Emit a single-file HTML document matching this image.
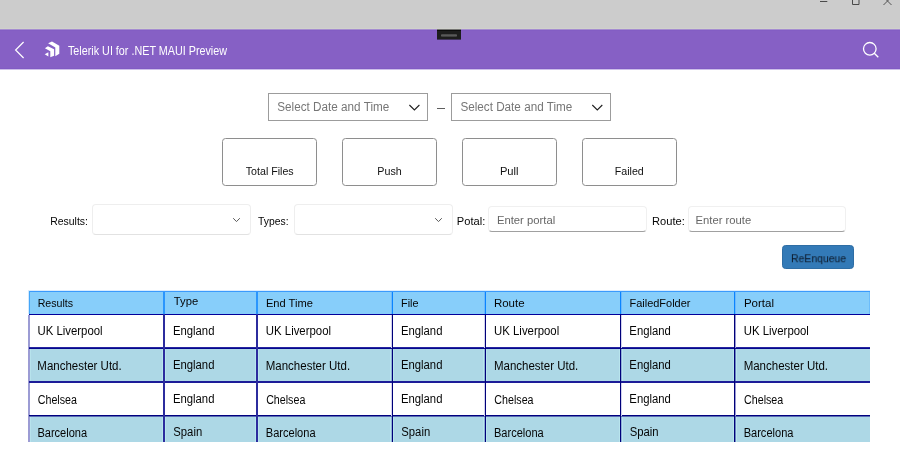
<!DOCTYPE html>
<html>
<head>
<meta charset="utf-8">
<title>Telerik UI for .NET MAUI Preview</title>
<style>
*{box-sizing:border-box;margin:0;padding:0}
html,body{width:900px;height:461px;overflow:hidden;background:#fff;font-family:"Liberation Sans",sans-serif;font-size:12px;color:#1a1a1a}
#app{position:absolute;left:0;top:0;width:900px;height:461px;will-change:transform}
.a,.c{position:absolute}
.t{position:absolute;left:0;top:0;white-space:nowrap;line-height:12px;font-size:12px;font-weight:normal;transform-origin:0 0}
#titlebar{left:0;top:0;width:900px;height:29px;background:#cccccc;border-bottom:1px solid #d0d1cc}
#nav{left:0;top:29px;width:900px;height:41px;background:#8660c5;border-top:1px solid #a58dd0;border-bottom:1px solid #cdbfe9;box-shadow:inset 0 1px 0 #835dc4,inset 0 -1px 0 #815bc4}
#grip{left:437px;top:-1px;width:24px;height:11px;background:#1d1d1d;border-top:1px solid #747472;border-bottom:1px solid #43355f;box-shadow:inset 0 1px 0 #0c0c0c}
#grip i{position:absolute;left:4px;top:4px;width:16px;height:3px;background:linear-gradient(#3a3a3a,#5a5a5a 35%,#585858 65%,#2c2c2c);border-radius:1px}
.dp{position:absolute;top:93px;width:160px;height:28px;border:1px solid #9c9c9c;background:#fff}
.dash{left:437px;top:108px;width:8px;height:1px;background:#5e5e5e}
.card{position:absolute;top:138px;width:95px;height:48px;border:1px solid #8e8e8e;border-radius:3.5px;background:#fff}
.combo{position:absolute;top:204px;width:159px;height:31px;border:1px solid #eeeeee;border-bottom-color:#e2e2e2;border-radius:4px;background:#fff}
.entry{position:absolute;top:206px;height:26px;border:1px solid #f0f0f0;border-bottom:1px solid #a0a0a0;border-radius:4px;background:#fff}
#btn{left:782px;top:245px;width:72px;height:24px;background:#337ab7;border:1px solid #2e6da4;border-radius:3.5px}
#grid{left:28px;top:290px;width:842px;height:152px;overflow:hidden}
.row{position:absolute;left:1px;width:841px}
.hdr{top:1px;height:23px;background:#87cefa}
.cell{position:absolute;top:0;height:100%}

</style>
</head>
<body>
<div id="app">
<div class="a" id="titlebar">
<svg class="a" style="left:810px;top:0" width="90" height="12" viewBox="810 0 90 12"><path d="M820 1.5h7.3" stroke="#4a4a4a" stroke-width="1" fill="none"/><path d="M852.5 0v4.5h6.5V0" stroke="#4a4a4a" stroke-width="1" fill="none"/><path d="M883.5 5L891.5 -3M891.5 5L883.5 -3" stroke="#444" stroke-width="0.9" fill="none"/></svg>
</div>
<div class="a" id="nav">
<div class="a" id="grip"><i></i></div>
<svg class="a" style="left:10px;top:8px" width="20" height="24" viewBox="10 38 20 24"><path d="M23.6 42L15.6 50L23.6 58" stroke="#fff" stroke-width="1.2" fill="none"/></svg>
<svg class="a" style="left:40px;top:8px" width="24" height="24" viewBox="40 38 24 24"><g fill="#fff"><path d="M48.1 43.3L52 41.5L59.3 45.8V53.7L55.3 56.2V47.6z"/><path d="M44.9 48.2L47.9 46.2L54.1 49.3V55.8L50.3 57.2V51.2z"/><path d="M44.7 54.3L48.4 52.2V56.4z"/></g></svg>
<span class="t" style="font-size:12px;transform:translate(67.98px,14.84px) scaleX(0.8978);color:#fff">Telerik UI for .NET MAUI Preview</span>
<svg class="a" style="left:858px;top:8px" width="24" height="24" viewBox="858 38 24 24"><circle cx="869.8" cy="48.8" r="6.3" stroke="#fff" stroke-width="1.3" fill="none"/><path d="M874.3 53.3l4 4" stroke="#fff" stroke-width="1.3" fill="none"/></svg>
</div>
<div class="dp" style="left:268px"><span class="t" style="font-size:12px;transform:translate(8.29px,6.84px) scaleX(0.9760);color:#767676">Select Date and Time</span><svg class="a" style="left:136px;top:6px" width="20" height="14"><path d="M4.4 5l5 5l5-5" stroke="#1f1f1f" stroke-width="1.1" fill="none"/></svg></div>
<div class="a dash"></div>
<div class="dp" style="left:451px"><span class="t" style="font-size:12px;transform:translate(8.39px,6.84px) scaleX(0.9751);color:#767676">Select Date and Time</span><svg class="a" style="left:136px;top:6px" width="20" height="14"><path d="M4.3 5l5 5l5-5" stroke="#1f1f1f" stroke-width="1.1" fill="none"/></svg></div>
<div class="card" style="left:222px"><span class="t" style="font-size:11px;transform:translate(22.76px,26.19px) scaleX(0.9678);color:#111">Total Files</span></div>
<div class="card" style="left:342px"><span class="t" style="font-size:11px;transform:translate(34.35px,26.19px) scaleX(0.9745);color:#111">Push</span></div>
<div class="card" style="left:462px"><span class="t" style="font-size:11px;transform:translate(36.91px,26.19px) scaleX(1.0149);color:#111">Pull</span></div>
<div class="card" style="left:582px"><span class="t" style="font-size:11px;transform:translate(31.75px,26.19px) scaleX(0.9692);color:#111">Failed</span></div>
<span class="t" style="font-size:11px;transform:translate(50.17px,215.19px) scaleX(0.9505);color:#050505">Results:</span>
<div class="combo" style="left:92px"><svg class="a" style="left:137px;top:10px" width="14" height="10"><path d="M3.2 3.2l3.3 3.4l3.3-3.4" stroke="#5a5a5a" stroke-width="1" fill="none"/></svg></div>
<span class="t" style="font-size:11px;transform:translate(258.06px,215.19px) scaleX(0.9414);color:#050505">Types:</span>
<div class="combo" style="left:294px"><svg class="a" style="left:136.5px;top:10px" width="14" height="10"><path d="M3.2 3.2l3.3 3.4l3.3-3.4" stroke="#5a5a5a" stroke-width="1" fill="none"/></svg></div>
<span class="t" style="font-size:11px;transform:translate(456.82px,215.19px) scaleX(1.0095);color:#050505">Potal:</span>
<div class="entry" style="left:488px;width:159px"><span class="t" style="font-size:11px;transform:translate(7.90px,7.19px) scaleX(1.0244);color:#666">Enter portal</span></div>
<span class="t" style="font-size:11px;transform:translate(652.02px,215.19px) scaleX(1.0098);color:#050505">Route:</span>
<div class="entry" style="left:688px;width:158px"><span class="t" style="font-size:11px;transform:translate(6.61px,7.19px) scaleX(1.0202);color:#666">Enter route</span></div>
<div class="a" id="btn"><span class="t" style="font-size:11px;transform:translate(7.97px,6.19px) scaleX(0.9498);color:#0c1726">ReEnqueue</span></div>
<div class="a" id="grid">
<div class="row hdr" style="top:1px;height:23px;background:#87cefa">
<div class="cell" style="left:0px;width:135px"><span class="t" style="font-size:11.5px;transform:translate(8.68px,6.02px) scaleX(0.9247);color:#050505">Results</span></div>
<div class="cell" style="left:135px;width:93px"><span class="t" style="font-size:11.5px;transform:translate(9.86px,4.02px) scaleX(0.9782);color:#050505">Type</span></div>
<div class="cell" style="left:228px;width:135px"><span class="t" style="font-size:11.5px;transform:translate(8.93px,6.02px) scaleX(0.9655);color:#050505">End Time</span></div>
<div class="cell" style="left:363px;width:93px"><span class="t" style="font-size:11.5px;transform:translate(9.06px,6.02px) scaleX(0.9412);color:#050505">File</span></div>
<div class="cell" style="left:456px;width:135px"><span class="t" style="font-size:11.5px;transform:translate(8.90px,6.02px) scaleX(0.9991);color:#050505">Route</span></div>
<div class="cell" style="left:591px;width:114px"><span class="t" style="font-size:11.5px;transform:translate(9.45px,6.02px) scaleX(0.9546);color:#050505">FailedFolder</span></div>
<div class="cell" style="left:705px;width:136px"><span class="t" style="font-size:11.5px;transform:translate(9.90px,6.02px) scaleX(1.0018);color:#050505">Portal</span></div>
</div>
<div class="row r" style="top:24px;height:35px;background:#ffffff">
<div class="cell" style="left:0px;width:135px"><span class="t" style="font-size:12px;transform:translate(8.47px,10.84px) scaleX(0.9478);color:#050505">UK Liverpool</span></div>
<div class="cell" style="left:135px;width:93px"><span class="t" style="font-size:12px;transform:translate(8.96px,10.84px) scaleX(0.9420);color:#050505">England</span></div>
<div class="cell" style="left:228px;width:135px"><span class="t" style="font-size:12px;transform:translate(8.87px,10.84px) scaleX(0.9478);color:#050505">UK Liverpool</span></div>
<div class="cell" style="left:363px;width:93px"><span class="t" style="font-size:12px;transform:translate(8.96px,10.84px) scaleX(0.9420);color:#050505">England</span></div>
<div class="cell" style="left:456px;width:135px"><span class="t" style="font-size:12px;transform:translate(9.07px,10.84px) scaleX(0.9478);color:#050505">UK Liverpool</span></div>
<div class="cell" style="left:591px;width:114px"><span class="t" style="font-size:12px;transform:translate(9.36px,10.84px) scaleX(0.9420);color:#050505">England</span></div>
<div class="cell" style="left:705px;width:136px"><span class="t" style="font-size:12px;transform:translate(9.77px,10.84px) scaleX(0.9478);color:#050505">UK Liverpool</span></div>
</div>
<div class="row r" style="top:59px;height:34px;background:#add8e6">
<div class="cell" style="left:0px;width:135px"><span class="t" style="font-size:12px;transform:translate(8.34px,10.84px) scaleX(0.9581);color:#050505">Manchester Utd.</span></div>
<div class="cell" style="left:135px;width:93px"><span class="t" style="font-size:12px;transform:translate(8.96px,9.84px) scaleX(0.9420);color:#050505">England</span></div>
<div class="cell" style="left:228px;width:135px"><span class="t" style="font-size:12px;transform:translate(8.74px,10.84px) scaleX(0.9581);color:#050505">Manchester Utd.</span></div>
<div class="cell" style="left:363px;width:93px"><span class="t" style="font-size:12px;transform:translate(8.96px,9.84px) scaleX(0.9420);color:#050505">England</span></div>
<div class="cell" style="left:456px;width:135px"><span class="t" style="font-size:12px;transform:translate(8.94px,10.84px) scaleX(0.9581);color:#050505">Manchester Utd.</span></div>
<div class="cell" style="left:591px;width:114px"><span class="t" style="font-size:12px;transform:translate(9.36px,9.84px) scaleX(0.9420);color:#050505">England</span></div>
<div class="cell" style="left:705px;width:136px"><span class="t" style="font-size:12px;transform:translate(9.64px,10.84px) scaleX(0.9581);color:#050505">Manchester Utd.</span></div>
</div>
<div class="row r" style="top:93px;height:33px;background:#ffffff">
<div class="cell" style="left:0px;width:135px"><span class="t" style="font-size:12px;transform:translate(8.74px,10.84px) scaleX(0.8899);color:#050505">Chelsea</span></div>
<div class="cell" style="left:135px;width:93px"><span class="t" style="font-size:12px;transform:translate(8.96px,9.84px) scaleX(0.9420);color:#050505">England</span></div>
<div class="cell" style="left:228px;width:135px"><span class="t" style="font-size:12px;transform:translate(9.14px,10.84px) scaleX(0.8899);color:#050505">Chelsea</span></div>
<div class="cell" style="left:363px;width:93px"><span class="t" style="font-size:12px;transform:translate(8.96px,9.84px) scaleX(0.9420);color:#050505">England</span></div>
<div class="cell" style="left:456px;width:135px"><span class="t" style="font-size:12px;transform:translate(9.34px,10.84px) scaleX(0.8899);color:#050505">Chelsea</span></div>
<div class="cell" style="left:591px;width:114px"><span class="t" style="font-size:12px;transform:translate(9.36px,9.84px) scaleX(0.9420);color:#050505">England</span></div>
<div class="cell" style="left:705px;width:136px"><span class="t" style="font-size:12px;transform:translate(10.04px,10.84px) scaleX(0.8899);color:#050505">Chelsea</span></div>
</div>
<div class="row r" style="top:126px;height:26px;background:#add8e6">
<div class="cell" style="left:0px;width:135px"><span class="t" style="font-size:12px;transform:translate(8.38px,10.84px) scaleX(0.9208);color:#050505">Barcelona</span></div>
<div class="cell" style="left:135px;width:93px"><span class="t" style="font-size:12px;transform:translate(9.31px,9.84px) scaleX(0.9402);color:#050505">Spain</span></div>
<div class="cell" style="left:228px;width:135px"><span class="t" style="font-size:12px;transform:translate(8.78px,10.84px) scaleX(0.9208);color:#050505">Barcelona</span></div>
<div class="cell" style="left:363px;width:93px"><span class="t" style="font-size:12px;transform:translate(9.31px,9.84px) scaleX(0.9402);color:#050505">Spain</span></div>
<div class="cell" style="left:456px;width:135px"><span class="t" style="font-size:12px;transform:translate(8.98px,10.84px) scaleX(0.9208);color:#050505">Barcelona</span></div>
<div class="cell" style="left:591px;width:114px"><span class="t" style="font-size:12px;transform:translate(9.71px,9.84px) scaleX(0.9402);color:#050505">Spain</span></div>
<div class="cell" style="left:705px;width:136px"><span class="t" style="font-size:12px;transform:translate(9.68px,10.84px) scaleX(0.9208);color:#050505">Barcelona</span></div>
</div>
<div class="c" style="left:0px;top:0px;width:842px;height:1px;background:#d9ecfe"></div>
<div class="c" style="left:1px;top:1px;width:841px;height:1px;background:#3a9afc"></div>
<div class="c" style="left:0px;top:1px;width:1px;height:23px;background:#d3e9fd"></div>
<div class="c" style="left:1px;top:1px;width:1px;height:23px;background:#44a6f8"></div>
<div class="c" style="left:841px;top:2px;width:1px;height:22px;background:#6bbcfb"></div>
<div class="c" style="left:0px;top:25px;width:2px;height:127px;background:#9c9cd4"></div>
<div class="c" style="left:1px;top:24px;width:841px;height:1px;background:#00009a"></div>
<div class="c" style="left:1px;top:57px;width:841px;height:1px;background:#2626a0"></div>
<div class="c" style="left:1px;top:58px;width:841px;height:1px;background:#07078d"></div>
<div class="c" style="left:1px;top:91px;width:841px;height:1px;background:#1c1c98"></div>
<div class="c" style="left:1px;top:92px;width:841px;height:1px;background:#1c1c98"></div>
<div class="c" style="left:1px;top:125px;width:841px;height:1px;background:#00007f"></div>
<div class="c" style="left:1px;top:126px;width:841px;height:1px;background:#5a6cb4"></div>
<div class="c" style="left:135px;top:2px;width:2px;height:22px;background:#2a96fd"></div>
<div class="c" style="left:135px;top:24px;width:2px;height:128px;background:#2c2c9e"></div>
<div class="c" style="left:228px;top:2px;width:2px;height:22px;background:#2a96fd"></div>
<div class="c" style="left:228px;top:24px;width:2px;height:128px;background:#2c2c9e"></div>
<div class="c" style="left:364px;top:2px;width:1px;height:22px;background:#0a84ff"></div>
<div class="c" style="left:364px;top:24px;width:1px;height:128px;background:#00007a"></div>
<div class="c" style="left:363px;top:2px;width:1px;height:22px;background:#6db9fc"></div>
<div class="c" style="left:363px;top:25px;width:1px;height:33px;background:#d2d2ee"></div>
<div class="c" style="left:363px;top:93px;width:1px;height:33px;background:#d2d2ee"></div>
<div class="c" style="left:363px;top:59px;width:1px;height:32px;background:#8fb0d6"></div>
<div class="c" style="left:363px;top:127px;width:1px;height:25px;background:#8fb0d6"></div>
<div class="c" style="left:457px;top:2px;width:1px;height:22px;background:#0a84ff"></div>
<div class="c" style="left:457px;top:24px;width:1px;height:128px;background:#00007a"></div>
<div class="c" style="left:456px;top:2px;width:1px;height:22px;background:#6db9fc"></div>
<div class="c" style="left:456px;top:25px;width:1px;height:33px;background:#d2d2ee"></div>
<div class="c" style="left:456px;top:93px;width:1px;height:33px;background:#d2d2ee"></div>
<div class="c" style="left:456px;top:59px;width:1px;height:32px;background:#8fb0d6"></div>
<div class="c" style="left:456px;top:127px;width:1px;height:25px;background:#8fb0d6"></div>
<div class="c" style="left:592px;top:2px;width:1px;height:22px;background:#0a84ff"></div>
<div class="c" style="left:592px;top:24px;width:1px;height:128px;background:#00007a"></div>
<div class="c" style="left:593px;top:2px;width:1px;height:22px;background:#6db9fc"></div>
<div class="c" style="left:593px;top:25px;width:1px;height:33px;background:#d2d2ee"></div>
<div class="c" style="left:593px;top:93px;width:1px;height:33px;background:#d2d2ee"></div>
<div class="c" style="left:593px;top:59px;width:1px;height:32px;background:#8fb0d6"></div>
<div class="c" style="left:593px;top:127px;width:1px;height:25px;background:#8fb0d6"></div>
<div class="c" style="left:706px;top:2px;width:1px;height:22px;background:#0a84ff"></div>
<div class="c" style="left:706px;top:24px;width:1px;height:128px;background:#00007a"></div>
<div class="c" style="left:707px;top:2px;width:1px;height:22px;background:#6db9fc"></div>
<div class="c" style="left:707px;top:25px;width:1px;height:33px;background:#9a9ad2"></div>
<div class="c" style="left:707px;top:93px;width:1px;height:33px;background:#9a9ad2"></div>
<div class="c" style="left:707px;top:59px;width:1px;height:32px;background:#6a84c0"></div>
<div class="c" style="left:707px;top:127px;width:1px;height:25px;background:#6a84c0"></div>
<div class="c" style="left:134px;top:59px;width:1px;height:32px;background:#b9e5ed"></div>
<div class="c" style="left:134px;top:127px;width:1px;height:25px;background:#b9e5ed"></div>
<div class="c" style="left:137px;top:59px;width:1px;height:32px;background:#b9e5ed"></div>
<div class="c" style="left:137px;top:127px;width:1px;height:25px;background:#b9e5ed"></div>
<div class="c" style="left:227px;top:59px;width:1px;height:32px;background:#b9e5ed"></div>
<div class="c" style="left:227px;top:127px;width:1px;height:25px;background:#b9e5ed"></div>
<div class="c" style="left:230px;top:59px;width:1px;height:32px;background:#b9e5ed"></div>
<div class="c" style="left:230px;top:127px;width:1px;height:25px;background:#b9e5ed"></div>
<div class="c" style="left:362px;top:59px;width:1px;height:32px;background:#b9e5ed"></div>
<div class="c" style="left:362px;top:127px;width:1px;height:25px;background:#b9e5ed"></div>
<div class="c" style="left:365px;top:59px;width:1px;height:32px;background:#b9e5ed"></div>
<div class="c" style="left:365px;top:127px;width:1px;height:25px;background:#b9e5ed"></div>
<div class="c" style="left:455px;top:59px;width:1px;height:32px;background:#b9e5ed"></div>
<div class="c" style="left:455px;top:127px;width:1px;height:25px;background:#b9e5ed"></div>
<div class="c" style="left:458px;top:59px;width:1px;height:32px;background:#b9e5ed"></div>
<div class="c" style="left:458px;top:127px;width:1px;height:25px;background:#b9e5ed"></div>
<div class="c" style="left:591px;top:59px;width:1px;height:32px;background:#b9e5ed"></div>
<div class="c" style="left:591px;top:127px;width:1px;height:25px;background:#b9e5ed"></div>
<div class="c" style="left:594px;top:59px;width:1px;height:32px;background:#b9e5ed"></div>
<div class="c" style="left:594px;top:127px;width:1px;height:25px;background:#b9e5ed"></div>
<div class="c" style="left:705px;top:59px;width:1px;height:32px;background:#b9e5ed"></div>
<div class="c" style="left:705px;top:127px;width:1px;height:25px;background:#b9e5ed"></div>
<div class="c" style="left:708px;top:59px;width:1px;height:32px;background:#b9e5ed"></div>
<div class="c" style="left:708px;top:127px;width:1px;height:25px;background:#b9e5ed"></div>
<div class="c" style="left:2px;top:59px;width:1px;height:32px;background:#b7e3ec"></div>
<div class="c" style="left:2px;top:127px;width:1px;height:25px;background:#b7e3ec"></div>
</div>
</div>
</body>
</html>
